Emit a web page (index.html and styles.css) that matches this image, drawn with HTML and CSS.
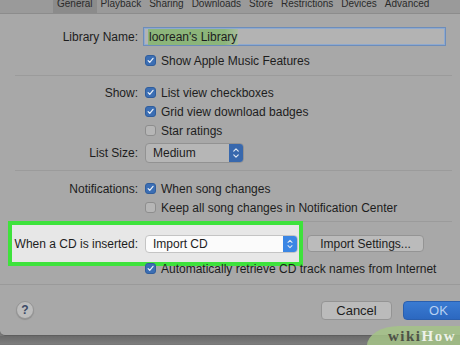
FILE: index.html
```html
<!DOCTYPE html>
<html>
<head>
<meta charset="utf-8">
<link rel="stylesheet" href="styles.css">
</head>
<body>
<div class="window">
  <nav class="tabs">
    <span class="tab active">General</span>
    <span class="tab">Playback</span>
    <span class="tab">Sharing</span>
    <span class="tab">Downloads</span>
    <span class="tab">Store</span>
    <span class="tab">Restrictions</span>
    <span class="tab">Devices</span>
    <span class="tab">Advanced</span>
  </nav>

  <main class="content">
    <div class="row row-name">
      <span class="label">Library Name:</span>
      <div class="field"><span class="sel">loorean's Library</span></div>
    </div>
    <div class="row row-apple">
      <span class="label"></span>
      <span class="check on"><svg viewBox="0 0 11 11"><path d="M2.6 5.6 L4.6 7.8 L8.6 2.8"/></svg></span>
      <span class="text">Show Apple Music Features</span>
    </div>

    <hr class="sep sep-1">

    <div class="row row-show">
      <span class="label">Show:</span>
      <span class="check on"><svg viewBox="0 0 11 11"><path d="M2.6 5.6 L4.6 7.8 L8.6 2.8"/></svg></span>
      <span class="text">List view checkboxes</span>
    </div>
    <div class="row">
      <span class="label"></span>
      <span class="check on"><svg viewBox="0 0 11 11"><path d="M2.6 5.6 L4.6 7.8 L8.6 2.8"/></svg></span>
      <span class="text">Grid view download badges</span>
    </div>
    <div class="row">
      <span class="label"></span>
      <span class="check"></span>
      <span class="text">Star ratings</span>
    </div>
    <div class="row row-size">
      <span class="label">List Size:</span>
      <div class="popup popup-size">
        <span class="popup-text">Medium</span>
        <span class="stepper"><svg viewBox="0 0 14 20"><path d="M4.5 8 L7 5.5 L9.5 8 M4.5 12 L7 14.5 L9.5 12"/></svg></span>
      </div>
    </div>

    <hr class="sep sep-2">

    <div class="row row-notif">
      <span class="label">Notifications:</span>
      <span class="check on"><svg viewBox="0 0 11 11"><path d="M2.6 5.6 L4.6 7.8 L8.6 2.8"/></svg></span>
      <span class="text">When song changes</span>
    </div>
    <div class="row">
      <span class="label"></span>
      <span class="check"></span>
      <span class="text">Keep all song changes in Notification Center</span>
    </div>

    <hr class="sep sep-3">

    <div class="cd-row">
      <div class="highlight">
        <span class="label label-cd">When a CD is inserted:</span>
        <div class="popup popup-cd">
          <span class="popup-text">Import CD</span>
          <span class="stepper"><svg viewBox="0 0 14 20"><path d="M4.5 8 L7 5.5 L9.5 8 M4.5 12 L7 14.5 L9.5 12"/></svg></span>
        </div>
      </div>
      <button class="btn btn-import">Import Settings...</button>
    </div>
    <div class="row row-auto">
      <span class="label"></span>
      <span class="check on"><svg viewBox="0 0 11 11"><path d="M2.6 5.6 L4.6 7.8 L8.6 2.8"/></svg></span>
      <span class="text">Automatically retrieve CD track names from Internet</span>
    </div>
  </main>

  <footer class="footer">
    <span class="help">?</span>
    <div class="actions">
      <button class="btn btn-cancel">Cancel</button>
      <button class="btn btn-ok">OK</button>
    </div>
  </footer>
</div>
<div class="desk"></div>

<div class="wikihow"><span class="wiki">wiki</span><span class="how">How</span></div>
</body>
</html>
```

FILE: styles.css
```css
* { box-sizing: border-box; }

html, body {
  margin: 0;
  padding: 0;
}

body {
  width: 460px;
  height: 345px;
  overflow: hidden;
  position: relative;
  background: #787878;
  font-family: "Liberation Sans", Arial, sans-serif;
  font-size: 12px;
  color: #1d1d1d;
}

.window {
  height: 336px;
  background: #a8a8a8;
  border-bottom: 1px solid #5e5e5e;
  border-bottom-left-radius: 5px;
  display: flex;
  flex-direction: column;
}

/* tabs */
.tabs {
  height: 14px;
  flex: 0 0 14px;
  background: #9a9a9a;
  border-bottom: 1px solid #8c8c8c;
  display: flex;
  padding-left: 53px;
  font-size: 10px;
  color: #2a2a2a;
}

.tab {
  height: 13px;
  line-height: 8px;
  padding: 0 4px;
}

.tab.active {
  background: #8b8b8b;
}

/* content */
.content {
  padding-top: 13px;
  display: flex;
  flex-direction: column;
}

.row {
  display: flex;
  align-items: center;
  height: 19px;
}

.label {
  flex: 0 0 138px;
  text-align: right;
  margin-right: 7px;
  white-space: nowrap;
}

.text {
  margin-left: 5px;
  white-space: nowrap;
}

.field {
  margin-left: -2px;
  width: 303px;
  height: 19px;
  background: #b3b3b3;
  border: 1px solid #6d8dba;
  box-shadow: inset 0 0 0 1px #8ea9cf;
  padding-left: 4px;
  display: flex;
  align-items: center;
}

.sel {
  background: linear-gradient(90deg, #8cb57a 85%, #a9bd9f);
  padding: 1px 1px;
  line-height: 14px;
}

.row-apple { margin-top: 5px; }

.check {
  flex: 0 0 11px;
  width: 11px;
  height: 11px;
  border-radius: 3px;
  background: #b6b6b6;
  border: 1px solid #8d8d8d;
  display: flex;
}

.check.on {
  background: #3b6eb4;
  border-color: #2f5d9c;
}

.check svg {
  width: 100%;
  height: 100%;
}

.check svg path {
  fill: none;
  stroke: #e8eef6;
  stroke-width: 1.5;
  stroke-linecap: round;
  stroke-linejoin: round;
}

.sep {
  border: 0;
  height: 1px;
  background: #9b9b9b;
  margin: 0 8px 0 15px;
}

.sep-1 { margin-top: 5px; }
.row-show { margin-top: 7px; }
.row-size { margin-top: 3px; height: 20px; }
.sep-2 { margin-top: 7px; }
.row-notif { margin-top: 8px; }
.sep-3 { margin-top: 4px; }

/* popups */
.popup {
  display: flex;
  align-items: stretch;
  border-radius: 4px;
  border: 1px solid #929292;
  overflow: hidden;
}

.popup-text {
  flex: 1;
  display: flex;
  align-items: center;
  padding-left: 7px;
}

.popup-size {
  width: 99px;
  height: 20px;
  background: #b6b6b6;
}

.stepper {
  flex: 0 0 14px;
  display: flex;
}

.popup-size .stepper { background: #3868ad; }

.stepper svg {
  width: 100%;
  height: 100%;
}

.stepper svg path {
  fill: none;
  stroke: #dfe7f2;
  stroke-width: 1.3;
  stroke-linecap: round;
  stroke-linejoin: round;
}

/* CD row */
.cd-row {
  display: flex;
  align-items: center;
  margin-top: -1px;
  margin-bottom: -7px;
  position: relative;
  z-index: 0;
}

.highlight {
  margin-left: 8px;
  width: 295px;
  height: 45px;
  border: 4px solid #3ee23c;
  background: #e7e7e7;
  display: flex;
  align-items: center;
  padding-right: 1px;
}

.label-cd {
  flex: 0 0 126px;
}

.popup-cd {
  width: 153px;
  height: 18px;
  background: #fbfbfb;
  border-color: #c4c4c4;
}

.popup-cd .stepper { background: #3b86e4; }

.btn {
  font-family: "Liberation Sans", Arial, sans-serif;
  font-size: 12px;
  color: #1d1d1d;
  background: #bbbbbb;
  border: 1px solid #949494;
  border-radius: 4px;
  padding: 0;
}

.btn-import {
  margin-left: 4px;
  width: 117px;
  height: 17px;
}

.row-auto {
  position: relative;
  z-index: 1;
}

/* footer */
.footer {
  margin-top: 6px;
  border-top: 1px solid #9a9a9a;
  flex: 1;
  display: flex;
  align-items: center;
  justify-content: space-between;
  padding: 0 0 0 16px;
}

.help {
  width: 18px;
  height: 18px;
  border-radius: 50%;
  background: #bdbdbd;
  border: 1px solid #959595;
  box-shadow: 0 1px 1px rgba(0,0,0,0.15);
  display: flex;
  align-items: center;
  justify-content: center;
  font-weight: bold;
  font-size: 12px;
  color: #3b4966;
}

.actions {
  display: flex;
  gap: 11px;
  margin-right: -14px;
}

.btn-cancel,
.btn-ok {
  width: 71px;
  height: 19px;
  font-size: 13px;
}

.btn-ok {
  background: linear-gradient(#3a7bd2, #2c68c0);
  border-color: #2a5fae;
  color: #b7d0f2;
}

.desk {
  height: 8px;
  background: linear-gradient(#6a6a6a, #7d7d7d);
}

/* watermark overlay */
.wikihow {
  position: absolute;
  left: 367px;
  top: 326px;
  width: 100px;
  height: 22px;
  border-top-left-radius: 32px 20px;
  background: rgba(165, 195, 135, 0.85);
  padding: 3px 0 0 21px;
  font-family: "Liberation Serif", serif;
  font-weight: bold;
  font-size: 15px;
  letter-spacing: 1.5px;
  line-height: 15px;
}

.wiki { color: #4e5247; }
.how { color: #eef2ea; }
```
